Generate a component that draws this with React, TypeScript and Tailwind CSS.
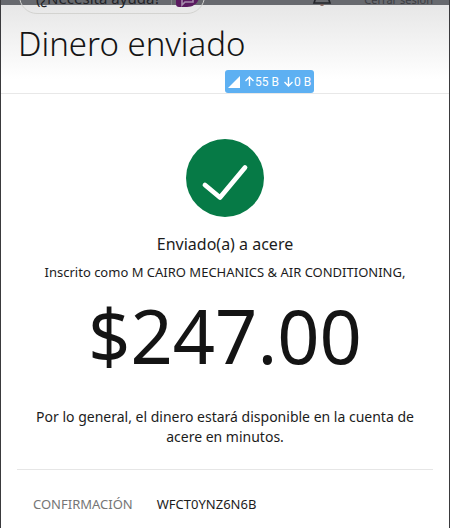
import React from 'react';

function CheckBadge() {
  return (
    <svg viewBox="0 0 78 78" className="size-[78px]" aria-hidden="true">
      <circle cx="39" cy="39" r="39" fill="#067a46" />
      <path d="M19 46 34 58.5 59 28.5" fill="none" stroke="#fff" strokeWidth="4.8" strokeLinecap="round" strokeLinejoin="round" />
    </svg>
  );
}

function AssistantLogo() {
  return (
    <svg viewBox="0 0 24 24" className="size-6" aria-hidden="true">
      <path d="M0 2h14a10 10 0 0 1 10 8c0 8-5 14-13 14H3a3 3 0 0 1-3-3z" fill="#5b1a60" />
      <path d="M6 9h11v10h-8l-3 3z" fill="none" stroke="#a58bab" strokeWidth="1.6" />
    </svg>
  );
}

function BellIcon() {
  return (
    <svg viewBox="0 0 20 24" className="h-6 w-5" fill="none" stroke="#25262b" strokeWidth="1.6" aria-hidden="true">
      <path d="M4.5 14V9a5.5 5.5 0 0 1 11 0v5l2.5 7H2z" />
      <path d="M8.5 23h3" stroke="#7b5a50" />
    </svg>
  );
}

// Bottom edge of the app bar, the rest is scrolled under the status bar
function AppBar() {
  return (
    <div className="flex h-[14px] items-end justify-between pr-4 pl-[18px]">
      <button className="flex h-9 w-[186px] shrink-0 items-end rounded-full border border-[#d3d3d0] pl-4 text-[15px] leading-5 text-[#222327]">
        <span className="flex-1 pb-[5px] text-left whitespace-nowrap">(¿Necesita ayuda?</span>
        <span className="mr-1 mb-2 h-5 w-px bg-[#85868a]" />
        <span className="mr-1 pb-[6px]">
          <AssistantLogo />
        </span>
      </button>
      <div className="flex items-end gap-8 pb-2">
        <button aria-label="Notificaciones">
          <BellIcon />
        </button>
        <a href="#" className="text-[11px] leading-3 text-[#3c3d42]">
          Cerrar sesión
        </a>
      </div>
    </div>
  );
}

function Arrow({ down = false }: { down?: boolean }) {
  return (
    <svg viewBox="0 0 11 11" className="size-[11px] shrink-0" fill="none" stroke="#fff" strokeWidth="1.4" aria-hidden="true">
      <path d={down ? 'M5.5 1v9M1.5 6l4 4 4-4' : 'M5.5 10V1M1.5 5l4-4 4 4'} />
    </svg>
  );
}

function NetworkSpeed() {
  return (
    <div className="absolute top-[70px] left-1/2 flex h-[23px] w-[89px] items-center gap-1 rounded-[3px] bg-[#5db0f2] pl-[3px] font-['Roboto',sans-serif] text-xs whitespace-nowrap text-white">
      <svg viewBox="0 0 12 12" className="size-3 shrink-0" aria-hidden="true">
        <path d="M12 0v12H0z" fill="#fff" />
      </svg>
      <span className="flex items-center">
        <Arrow />
        55 B
      </span>
      <span className="flex items-center">
        <Arrow down />
        0 B
      </span>
    </div>
  );
}

export default function App() {
  return (
    <div className="relative min-h-screen overflow-hidden border-x border-[#3a3a3d] bg-white font-['Noto_Sans',sans-serif] text-[#1c1c1c]">
      <header className="border-b border-[#e8e8e8] bg-linear-to-b from-[#e5e5e5] to-white to-85% pb-7">
        <div className="absolute inset-x-0 top-0 h-[5px] bg-[#67696e]" />
        <div className="relative">
          <AppBar />
        </div>
        <h1 className="pt-2 pl-[17px] text-[33px] leading-[43px] font-light text-[#141414]">Dinero enviado</h1>
      </header>
      <NetworkSpeed />

      <main className="px-4">
        <section className="flex flex-col items-center pt-[45px] text-center">
          <CheckBadge />
          <h2 className="mt-[15px] text-base leading-6">Enviado(a) a acere</h2>
          <p className="mt-1 text-[13px] leading-6 whitespace-nowrap">Inscrito como M CAIRO MECHANICS &amp; AIR CONDITIONING,</p>
          <p className="mt-2 text-[74px] leading-[88px] text-[#141414]">$247.00</p>
          <p className="mt-[27px] px-4 text-[14px] leading-5">
            Por lo general, el dinero estará disponible en la cuenta de acere en minutos.
          </p>
        </section>
        <dl className="mt-[22px] flex gap-6 border-t border-[#e6e6e6] px-4 pt-6 text-[13px] leading-5">
          <dt className="text-[#757575]">CONFIRMACIÓN</dt>
          <dd>WFCT0YNZ6N6B</dd>
        </dl>
      </main>
    </div>
  );
}
